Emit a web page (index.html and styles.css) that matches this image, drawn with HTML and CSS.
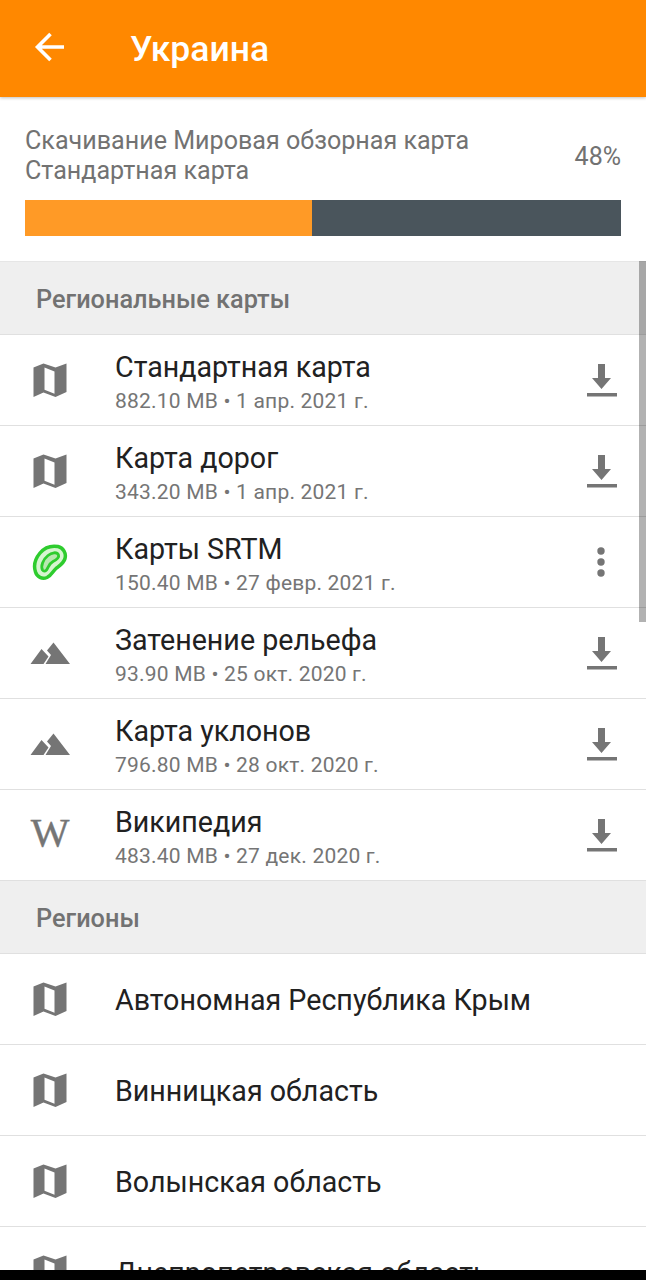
FILE: index.html
```html
<!DOCTYPE html>
<html lang="ru">
<head>
<meta charset="utf-8">
<title>Украина</title>
<link rel="stylesheet" href="styles.css">
</head>
<body>
<svg class="defs" width="0" height="0" aria-hidden="true">
  <symbol id="i-map" viewBox="0 0 34 35"><path d="M.5 4.500 10.500.5 22.500 4.500 33.500.5V29L22.500 34 10.500 29.500.5 34ZM11.500 4.500V26.700L21.500 30.700V8.500Z" fill-rule="evenodd"/></symbol>
  <symbol id="i-dl" viewBox="0 0 32 34"><path d="M11 1h7v14h6L14.500 26 5 15h6ZM0 30h30v3.500H0Z"/></symbol>
  <symbol id="i-hill" viewBox="0 0 40 22"><path d="M23.500.5 17 8.500 21 13 15.500 22H40ZM.5 22 11.500 7 18.500 14.500 13.500 22Z"/></symbol>
</svg>
<div class="screen">
  <header class="appbar">
    <svg class="back" viewBox="0 0 32 32"><path d="M30 16H5M16.500 3 3.500 16l13 13"/></svg>
    <h1 class="appbar-title">Украина</h1>
  </header>
  <section class="download">
    <div class="download-head">
      <div class="download-text">Скачивание Мировая обзорная карта<br>Стандартная карта</div>
      <div class="download-pct">48%</div>
    </div>
    <div class="progress"><div class="progress-fill" style="width:48.2%"></div></div>
  </section>
  <div class="section-title">Региональные карты</div>
  <div class="row">
    <svg class="ico ico-map"><use href="#i-map"/></svg>
    <div class="row-body"><div class="row-title">Стандартная карта</div><div class="row-sub">882.10 MB • 1 апр. 2021 г.</div></div>
    <svg class="act"><use href="#i-dl"/></svg>
  </div>
  <div class="row">
    <svg class="ico ico-map"><use href="#i-map"/></svg>
    <div class="row-body"><div class="row-title">Карта дорог</div><div class="row-sub">343.20 MB • 1 апр. 2021 г.</div></div>
    <svg class="act"><use href="#i-dl"/></svg>
  </div>
  <div class="row">
    <svg class="ico ico-srtm" viewBox="0 0 37 37"><path class="srtm-out" d="M3.500 28C1.500 22 3 15 8 9 13 3 20 1.500 26 2.500 31 3.500 34.500 9 33 14.500 32 19 27 22 24 24.500 21 27 20 31 15 33.500 10 35.500 5 33 3.500 28Z"/><path class="srtm-in" d="M10.500 26C8.500 22 11 15.500 16 11.500 19.500 8.500 25 7.500 26.500 11 27.500 14 24 16 21 17.500 17 19.500 16.500 23 14.500 26 13 27.500 11.500 27.500 10.500 26Z"/></svg>
    <div class="row-body"><div class="row-title">Карты SRTM</div><div class="row-sub">150.40 MB • 27 февр. 2021 г.</div></div>
    <svg class="act act-more" viewBox="0 0 30 34"><circle cx="15" cy="6" r="3.700"/><circle cx="15" cy="17" r="3.700"/><circle cx="15" cy="28" r="3.700"/></svg>
  </div>
  <div class="row">
    <svg class="ico ico-hill"><use href="#i-hill"/></svg>
    <div class="row-body"><div class="row-title">Затенение рельефа</div><div class="row-sub">93.90 MB • 25 окт. 2020 г.</div></div>
    <svg class="act"><use href="#i-dl"/></svg>
  </div>
  <div class="row">
    <svg class="ico ico-hill"><use href="#i-hill"/></svg>
    <div class="row-body"><div class="row-title">Карта уклонов</div><div class="row-sub">796.80 MB • 28 окт. 2020 г.</div></div>
    <svg class="act"><use href="#i-dl"/></svg>
  </div>
  <div class="row">
    <span class="ico ico-wiki">W</span>
    <div class="row-body"><div class="row-title">Википедия</div><div class="row-sub">483.40 MB • 27 дек. 2020 г.</div></div>
    <svg class="act"><use href="#i-dl"/></svg>
  </div>
  <div class="section-title">Регионы</div>
  <div class="row">
    <svg class="ico ico-map"><use href="#i-map"/></svg>
    <div class="row-body"><div class="row-title">Автономная Республика Крым</div></div>
  </div>
  <div class="row">
    <svg class="ico ico-map"><use href="#i-map"/></svg>
    <div class="row-body"><div class="row-title">Винницкая область</div></div>
  </div>
  <div class="row">
    <svg class="ico ico-map"><use href="#i-map"/></svg>
    <div class="row-body"><div class="row-title">Волынская область</div></div>
  </div>
  <div class="row">
    <svg class="ico ico-map"><use href="#i-map"/></svg>
    <div class="row-body"><div class="row-title">Днепропетровская область</div></div>
  </div>
  <div class="scrollbar"></div>
  <div class="navbar"></div>
</div>
</body>
</html>
```
FILE: styles.css
```css
* { box-sizing: border-box; }
html, body { margin: 0; padding: 0; }
body { background: #fff; font-family: Roboto, "Noto Sans", sans-serif; }
.defs { position: absolute; }
.screen { position: relative; width: 646px; height: 1280px; overflow: hidden; background: #fff; }

.appbar { height: 97px; background: #ff8800; display: flex; align-items: center; padding-left: 34px; box-shadow: 0 1px 3px rgba(0,0,0,.25); position: relative; }
.back { width: 32px; height: 32px; fill: none; stroke: #fff; stroke-width: 3.6; margin-right: 64px; margin-top: -4px; }
.appbar-title { margin: 0; font-size: 35.500px; font-weight: 500; color: #fff; }

.download { height: 165px; padding: 29px 25px 0; border-bottom: 1px solid #e6e6e6; }
.download-head { display: flex; justify-content: space-between; align-items: center; }
.download-text { font-size: 25.100px; line-height: 30px; color: #727272; }
.download-pct { font-size: 25px; color: #727272; }
.progress { height: 36px; margin-top: 14px; background: #4a555c; }
.progress-fill { height: 100%; background: #ff9a26; }

.section-title { height: 73px; display: flex; align-items: center; padding-left: 36px; padding-top: 2px; background: #efefef; border-bottom: 1px solid #e0e0e0; font-size: 25.300px; font-weight: 500; color: #727272; }

.row { height: 91px; display: flex; align-items: center; border-bottom: 1px solid #e0e0e0; padding-left: 25px; }
.ico { flex: none; width: 50px; margin-right: 40px; }
.ico-map { height: 35px; width: 34px; margin-left: 8px; margin-right: 48px; fill: #757575; }
.ico-hill { height: 22px; width: 40px; margin-left: 5px; margin-right: 45px; margin-top: -1px; fill: #757575; }
.ico-srtm { height: 37px; width: 37px; margin-left: 7px; margin-right: 46px; }
.srtm-out { fill: #d6f5d0; stroke: #2ecc2e; stroke-width: 3.500; }
.srtm-in { fill: #b8e8b0; stroke: #2ecc2e; stroke-width: 2.800; }
.ico-wiki { font-family: "Liberation Serif", serif; font-size: 41px; line-height: 44px; margin-top: -6px; color: #757575; text-align: center; -webkit-text-stroke: .4px #757575; }
.row-body { flex: 1; min-width: 0; padding-top: 2px; }
.row-title { font-size: 28.640px; line-height: 34px; color: #212121; white-space: nowrap; }
.row-sub { font-size: 21px; line-height: 26px; margin-top: 4px; margin-bottom: -2px; color: #757575; letter-spacing: .2px; }
.act { flex: none; width: 32px; height: 34px; margin-right: 27px; fill: #757575; }
.act-more { margin-right: 29px; }

.scrollbar { position: absolute; right: 0; top: 261px; width: 7px; height: 361px; background: rgba(0,0,0,.3); }
.navbar { position: absolute; left: 0; right: 0; bottom: 0; height: 10px; background: #000; }
```
